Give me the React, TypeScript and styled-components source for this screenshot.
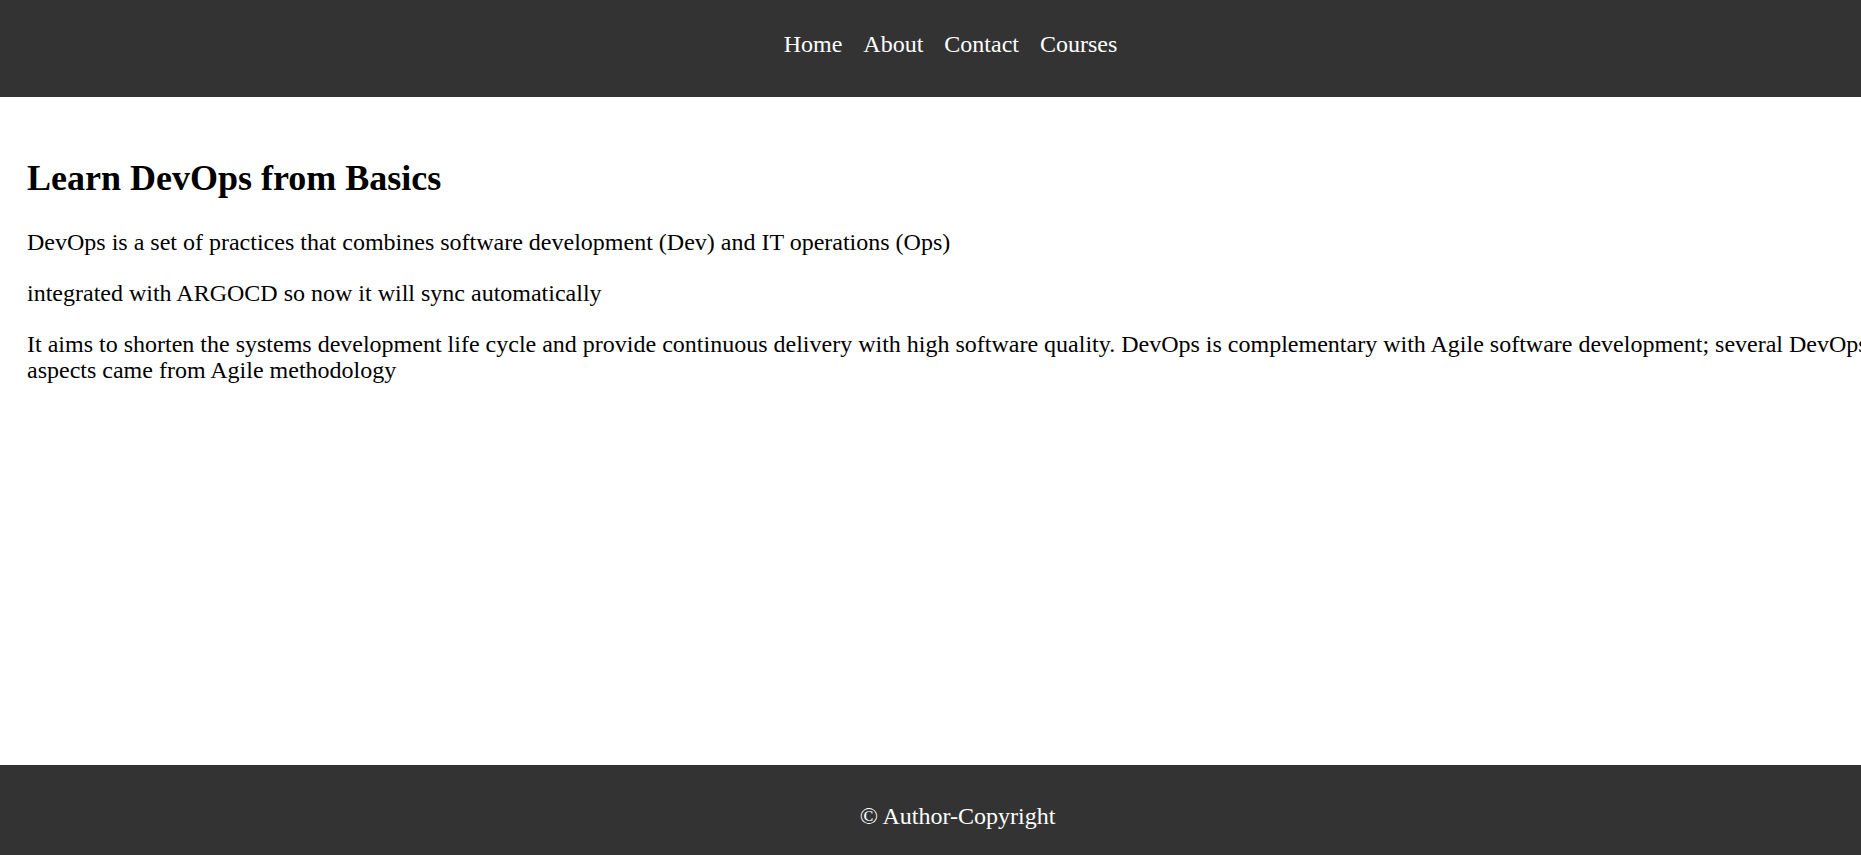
import React from "react";
import styled, { createGlobalStyle } from "styled-components";

const GlobalStyle = createGlobalStyle`
  html, body {
    margin: 0;
    padding: 0;
    overflow-x: hidden;
  }
  body {
    font-family: "Liberation Serif", "Times New Roman", serif;
    font-size: 24px;
    color: #000;
    background: #fff;
  }
`;

const S = {
  Page: styled.div`
    min-height: 855px;
    display: flex;
    flex-direction: column;
  `,
  Header: styled.header`
    box-sizing: border-box;
    height: 97px;
    padding-top: 31px;
    background: #333333;
  `,
  NavList: styled.ul`
    list-style: none;
    margin: 0;
    padding: 0 0 0 40px;
    display: flex;
    justify-content: center;
    gap: 21px;
  `,
  NavLink: styled.a`
    color: #fff;
    text-decoration: none;
    font-size: 24px;
  `,
  Main: styled.main`
    flex: 1;
    width: 100%;
    padding: 28px 27px 0;
  `,
  Title: styled.h2`
    font-size: 36px;
    font-weight: bold;
    margin: 32px 0 30px;
  `,
  Text: styled.p`
    font-size: 24px;
    line-height: 26px;
    margin: 0 0 25px;
  `,
  Footer: styled.footer`
    box-sizing: border-box;
    height: 90px;
    padding: 38px 0 0 54px;
    background: #333333;
    color: #fff;
    text-align: center;
    font-size: 24px;
  `,
};

const links = ["Home", "About", "Contact", "Courses"];

const App: React.FC = () => {
  return (
    <>
      <GlobalStyle />
      <S.Page>
        <S.Header>
          <nav>
            <S.NavList>
              {links.map((l) => (
                <li key={l}>
                  <S.NavLink href="#">{l}</S.NavLink>
                </li>
              ))}
            </S.NavList>
          </nav>
        </S.Header>
        <S.Main>
          <S.Title>Learn DevOps from Basics</S.Title>
          <S.Text>
            DevOps is a set of practices that combines software development (Dev) and IT operations (Ops)
          </S.Text>
          <S.Text>integrated with ARGOCD so now it will sync automatically</S.Text>
          <S.Text>
            It aims to shorten the systems development life cycle and provide continuous delivery with high
            software quality. DevOps is complementary with Agile software development; several DevOps aspects
            came from Agile methodology
          </S.Text>
        </S.Main>
        <S.Footer>&copy; Author-Copyright</S.Footer>
      </S.Page>
    </>
  );
};

export default App;
